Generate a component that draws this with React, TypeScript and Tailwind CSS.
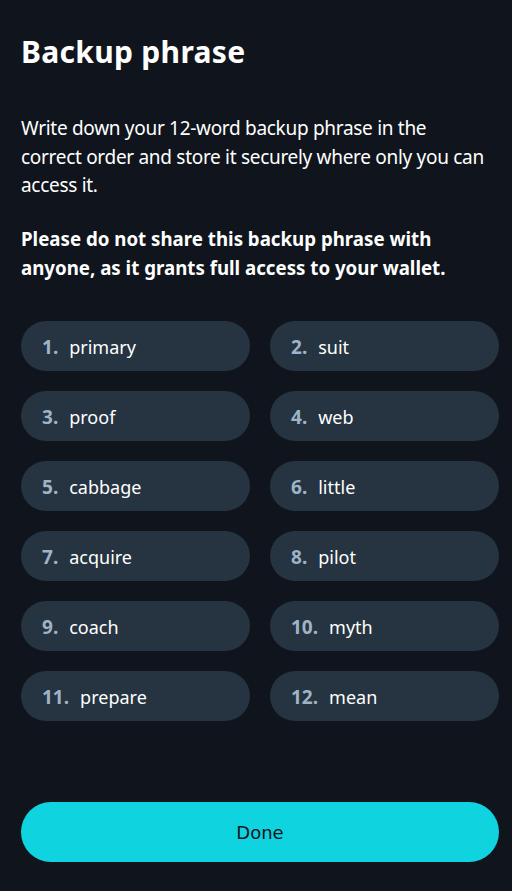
import React from "react";

const WORDS = ["primary", "suit", "proof", "web", "cabbage", "little", "acquire", "pilot", "coach", "myth", "prepare", "mean"];

export default function App() {
  return (
    <div className="min-h-[891px] w-full bg-[#10151d] text-white flex flex-col pl-[21px] pr-[13px] pb-[29px]" style={{ fontFamily: '"Noto Sans", "Open Sans", sans-serif' }}>
      <h1 className="mt-[31px] text-[30px] font-bold leading-[42px] tracking-[0.3px]">Backup phrase</h1>

      <p className="mt-[41px] text-[19px] leading-[28.5px] tracking-[-0.3px]">
        Write down your 12-word backup phrase in the
        <br />
        correct order and store it securely where only you can access it.
      </p>
      <p className="mt-[24px] text-[18.7px] leading-[29px] font-bold">
        Please do not share this backup phrase with anyone, as it grants full access to your wallet.
      </p>

      <div className="mt-[39px] grid grid-cols-2 gap-x-[20px] gap-y-[20px]">
        {WORDS.map((w, i) => (
          <div key={w} className="h-[50px] rounded-full bg-[#253440] flex items-center pl-[21px] pt-[3px] text-[18px]">
            <span className="font-bold text-[19px] text-[#9fb3c6] mr-[11px]">{i + 1}.</span>
            <span>{w}</span>
          </div>
        ))}
      </div>

      <div className="flex-1" />

      <button className="h-[60px] w-full rounded-full bg-[#0fd3de] text-[#10151d] text-[18px]" style={{ fontFamily: '"DejaVu Sans", sans-serif' }}>
        Done
      </button>
    </div>
  );
}
